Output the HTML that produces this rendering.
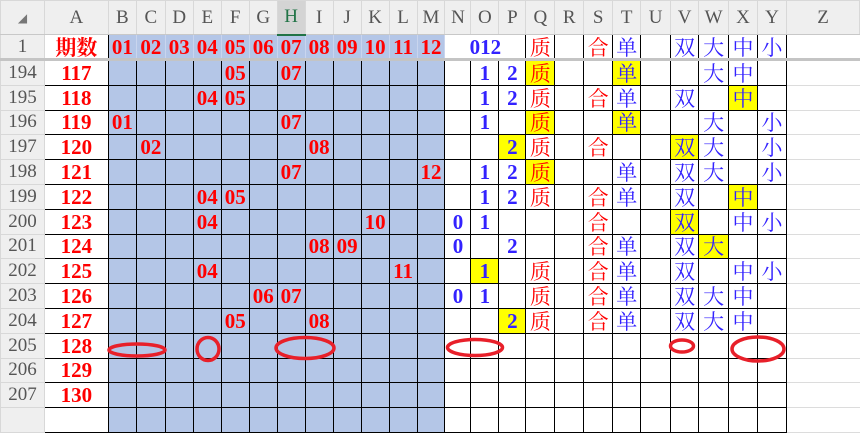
<!DOCTYPE html>
<html><head><meta charset="utf-8"><style>
body{margin:0;width:860px;height:416px;overflow:hidden;background:#fff;}
table{border-collapse:collapse;table-layout:fixed;position:absolute;left:0;top:0;}
td{padding:0;border:1px solid #000;text-align:center;vertical-align:middle;overflow:hidden;white-space:nowrap;
 font-family:"Liberation Serif","Noto Serif CJK SC",serif;font-size:21px;font-weight:bold;color:#f00;line-height:20px;}
tr.h td{background:#efefef;border:1px solid #d8d8d8;color:#555;font-weight:normal;font-size:19px;border-bottom:1px solid #c8c8c8;font-family:"Liberation Serif",serif;}
td.rh{background:#efefef;border:1px solid #d8d8d8;color:#555;font-weight:normal;font-size:19px;}
td.sel{background:#d4d4d4!important;border-bottom:2px solid #217346!important;color:#217346!important;}
td.b{background:#b4c6e7;}
td.a{background:#fff;}
td.z{border:none;border-bottom:1px solid #dcdcdc;border-left:1px solid #000;}
td.u{color:#3322ff;}
td.c{font-family:"Noto Serif CJK SC","Liberation Serif",serif;font-weight:normal;font-size:21px;}
td.y{background:#ff0;}
tr.r1 td{border-bottom:3px solid #c4c4c4;}
tr.r1 td.b{border-left:1px solid #c9d5ee;border-right:1px solid #c9d5ee;}
tr.d td{height:23.8px;}
</style></head><body>
<table>
<colgroup><col style="width:44px"><col style="width:64px">
<col style="width:28px"><col style="width:29px"><col style="width:28px"><col style="width:28px"><col style="width:28px"><col style="width:28px"><col style="width:28px"><col style="width:28px"><col style="width:28px"><col style="width:28px"><col style="width:28px"><col style="width:28px">
<col style="width:26px"><col style="width:28px"><col style="width:27px"><col style="width:29px"><col style="width:29px"><col style="width:29px"><col style="width:28px"><col style="width:30px"><col style="width:28px"><col style="width:30px"><col style="width:29px"><col style="width:29px"><col style="width:73px"></colgroup>
<tr class="h" style="height:34px"><td style="font-size:12px;color:#777">◢</td><td>A</td><td>B</td><td>C</td><td>D</td><td>E</td><td>F</td><td>G</td><td class="sel">H</td><td>I</td><td>J</td><td>K</td><td>L</td><td>M</td><td>N</td><td>O</td><td>P</td><td>Q</td><td>R</td><td>S</td><td>T</td><td>U</td><td>V</td><td>W</td><td>X</td><td>Y</td><td>Z</td></tr>
<tr class="r1" style="height:25px"><td class="rh">1</td><td class="a c" style="font-weight:bold">期数</td><td class="b">01</td><td class="b">02</td><td class="b">03</td><td class="b">04</td><td class="b">05</td><td class="b">06</td><td class="b">07</td><td class="b">08</td><td class="b">09</td><td class="b">10</td><td class="b">11</td><td class="b">12</td><td colspan="3" class="u">012</td><td class="c">质</td><td></td><td class="c">合</td><td class="c u">单</td><td></td><td class="c u">双</td><td class="c u">大</td><td class="c u">中</td><td class="c u">小</td><td class="z"></td></tr>
<tr class="d"><td class="rh">194</td><td class="a">117</td><td class="b"></td><td class="b"></td><td class="b"></td><td class="b"></td><td class="b">05</td><td class="b"></td><td class="b">07</td><td class="b"></td><td class="b"></td><td class="b"></td><td class="b"></td><td class="b"></td><td></td><td class="u">1</td><td class="u">2</td><td class="c y">质</td><td></td><td></td><td class="c u y">单</td><td></td><td></td><td class="c u">大</td><td class="c u">中</td><td></td><td class="z"></td></tr>
<tr class="d"><td class="rh">195</td><td class="a">118</td><td class="b"></td><td class="b"></td><td class="b"></td><td class="b">04</td><td class="b">05</td><td class="b"></td><td class="b"></td><td class="b"></td><td class="b"></td><td class="b"></td><td class="b"></td><td class="b"></td><td></td><td class="u">1</td><td class="u">2</td><td class="c">质</td><td></td><td class="c">合</td><td class="c u">单</td><td></td><td class="c u">双</td><td></td><td class="c u y">中</td><td></td><td class="z"></td></tr>
<tr class="d"><td class="rh">196</td><td class="a">119</td><td class="b">01</td><td class="b"></td><td class="b"></td><td class="b"></td><td class="b"></td><td class="b"></td><td class="b">07</td><td class="b"></td><td class="b"></td><td class="b"></td><td class="b"></td><td class="b"></td><td></td><td class="u">1</td><td></td><td class="c y">质</td><td></td><td></td><td class="c u y">单</td><td></td><td></td><td class="c u">大</td><td></td><td class="c u">小</td><td class="z"></td></tr>
<tr class="d"><td class="rh">197</td><td class="a">120</td><td class="b"></td><td class="b">02</td><td class="b"></td><td class="b"></td><td class="b"></td><td class="b"></td><td class="b"></td><td class="b">08</td><td class="b"></td><td class="b"></td><td class="b"></td><td class="b"></td><td></td><td></td><td class="u y">2</td><td class="c">质</td><td></td><td class="c">合</td><td></td><td></td><td class="c u y">双</td><td class="c u">大</td><td></td><td class="c u">小</td><td class="z"></td></tr>
<tr class="d"><td class="rh">198</td><td class="a">121</td><td class="b"></td><td class="b"></td><td class="b"></td><td class="b"></td><td class="b"></td><td class="b"></td><td class="b">07</td><td class="b"></td><td class="b"></td><td class="b"></td><td class="b"></td><td class="b">12</td><td></td><td class="u">1</td><td class="u">2</td><td class="c y">质</td><td></td><td></td><td class="c u">单</td><td></td><td class="c u">双</td><td class="c u">大</td><td></td><td class="c u">小</td><td class="z"></td></tr>
<tr class="d"><td class="rh">199</td><td class="a">122</td><td class="b"></td><td class="b"></td><td class="b"></td><td class="b">04</td><td class="b">05</td><td class="b"></td><td class="b"></td><td class="b"></td><td class="b"></td><td class="b"></td><td class="b"></td><td class="b"></td><td></td><td class="u">1</td><td class="u">2</td><td class="c">质</td><td></td><td class="c">合</td><td class="c u">单</td><td></td><td class="c u">双</td><td></td><td class="c u y">中</td><td></td><td class="z"></td></tr>
<tr class="d"><td class="rh">200</td><td class="a">123</td><td class="b"></td><td class="b"></td><td class="b"></td><td class="b">04</td><td class="b"></td><td class="b"></td><td class="b"></td><td class="b"></td><td class="b"></td><td class="b">10</td><td class="b"></td><td class="b"></td><td class="u">0</td><td class="u">1</td><td></td><td></td><td></td><td class="c">合</td><td></td><td></td><td class="c u y">双</td><td></td><td class="c u">中</td><td class="c u">小</td><td class="z"></td></tr>
<tr class="d"><td class="rh">201</td><td class="a">124</td><td class="b"></td><td class="b"></td><td class="b"></td><td class="b"></td><td class="b"></td><td class="b"></td><td class="b"></td><td class="b">08</td><td class="b">09</td><td class="b"></td><td class="b"></td><td class="b"></td><td class="u">0</td><td></td><td class="u">2</td><td></td><td></td><td class="c">合</td><td class="c u">单</td><td></td><td class="c u">双</td><td class="c u y">大</td><td></td><td></td><td class="z"></td></tr>
<tr class="d"><td class="rh">202</td><td class="a">125</td><td class="b"></td><td class="b"></td><td class="b"></td><td class="b">04</td><td class="b"></td><td class="b"></td><td class="b"></td><td class="b"></td><td class="b"></td><td class="b"></td><td class="b">11</td><td class="b"></td><td></td><td class="u y">1</td><td></td><td class="c">质</td><td></td><td class="c">合</td><td class="c u">单</td><td></td><td class="c u">双</td><td></td><td class="c u">中</td><td class="c u">小</td><td class="z"></td></tr>
<tr class="d"><td class="rh">203</td><td class="a">126</td><td class="b"></td><td class="b"></td><td class="b"></td><td class="b"></td><td class="b"></td><td class="b">06</td><td class="b">07</td><td class="b"></td><td class="b"></td><td class="b"></td><td class="b"></td><td class="b"></td><td class="u">0</td><td class="u">1</td><td></td><td class="c">质</td><td></td><td class="c">合</td><td class="c u">单</td><td></td><td class="c u">双</td><td class="c u">大</td><td class="c u">中</td><td></td><td class="z"></td></tr>
<tr class="d"><td class="rh">204</td><td class="a">127</td><td class="b"></td><td class="b"></td><td class="b"></td><td class="b"></td><td class="b">05</td><td class="b"></td><td class="b"></td><td class="b">08</td><td class="b"></td><td class="b"></td><td class="b"></td><td class="b"></td><td></td><td></td><td class="u y">2</td><td class="c">质</td><td></td><td class="c">合</td><td class="c u">单</td><td></td><td class="c u">双</td><td class="c u">大</td><td class="c u">中</td><td></td><td class="z"></td></tr>
<tr class="d"><td class="rh">205</td><td class="a">128</td><td class="b"></td><td class="b"></td><td class="b"></td><td class="b"></td><td class="b"></td><td class="b"></td><td class="b"></td><td class="b"></td><td class="b"></td><td class="b"></td><td class="b"></td><td class="b"></td><td></td><td></td><td></td><td></td><td></td><td></td><td></td><td></td><td></td><td></td><td></td><td></td><td class="z"></td></tr>
<tr class="d"><td class="rh">206</td><td class="a">129</td><td class="b"></td><td class="b"></td><td class="b"></td><td class="b"></td><td class="b"></td><td class="b"></td><td class="b"></td><td class="b"></td><td class="b"></td><td class="b"></td><td class="b"></td><td class="b"></td><td></td><td></td><td></td><td></td><td></td><td></td><td></td><td></td><td></td><td></td><td></td><td></td><td class="z"></td></tr>
<tr class="d"><td class="rh">207</td><td class="a">130</td><td class="b"></td><td class="b"></td><td class="b"></td><td class="b"></td><td class="b"></td><td class="b"></td><td class="b"></td><td class="b"></td><td class="b"></td><td class="b"></td><td class="b"></td><td class="b"></td><td></td><td></td><td></td><td></td><td></td><td></td><td></td><td></td><td></td><td></td><td></td><td></td><td class="z"></td></tr>
<tr class="d"><td class="rh"></td><td class="a"></td><td class="b"></td><td class="b"></td><td class="b"></td><td class="b"></td><td class="b"></td><td class="b"></td><td class="b"></td><td class="b"></td><td class="b"></td><td class="b"></td><td class="b"></td><td class="b"></td><td></td><td></td><td></td><td></td><td></td><td></td><td></td><td></td><td></td><td></td><td></td><td></td><td class="z"></td></tr>
</table>
<svg width="860" height="416" style="position:absolute;left:0;top:0" fill="none" stroke="#e8202a" stroke-width="3.5">
<ellipse cx="137" cy="350" rx="28" ry="6"/>
<ellipse cx="208" cy="349" rx="11" ry="11.5"/>
<ellipse cx="305" cy="348" rx="29" ry="10.5"/>
<ellipse cx="475" cy="347.5" rx="27.5" ry="8"/>
<ellipse cx="682" cy="346" rx="11.5" ry="6"/>
<ellipse cx="758" cy="349" rx="26" ry="12"/>
</svg>
</body></html>
